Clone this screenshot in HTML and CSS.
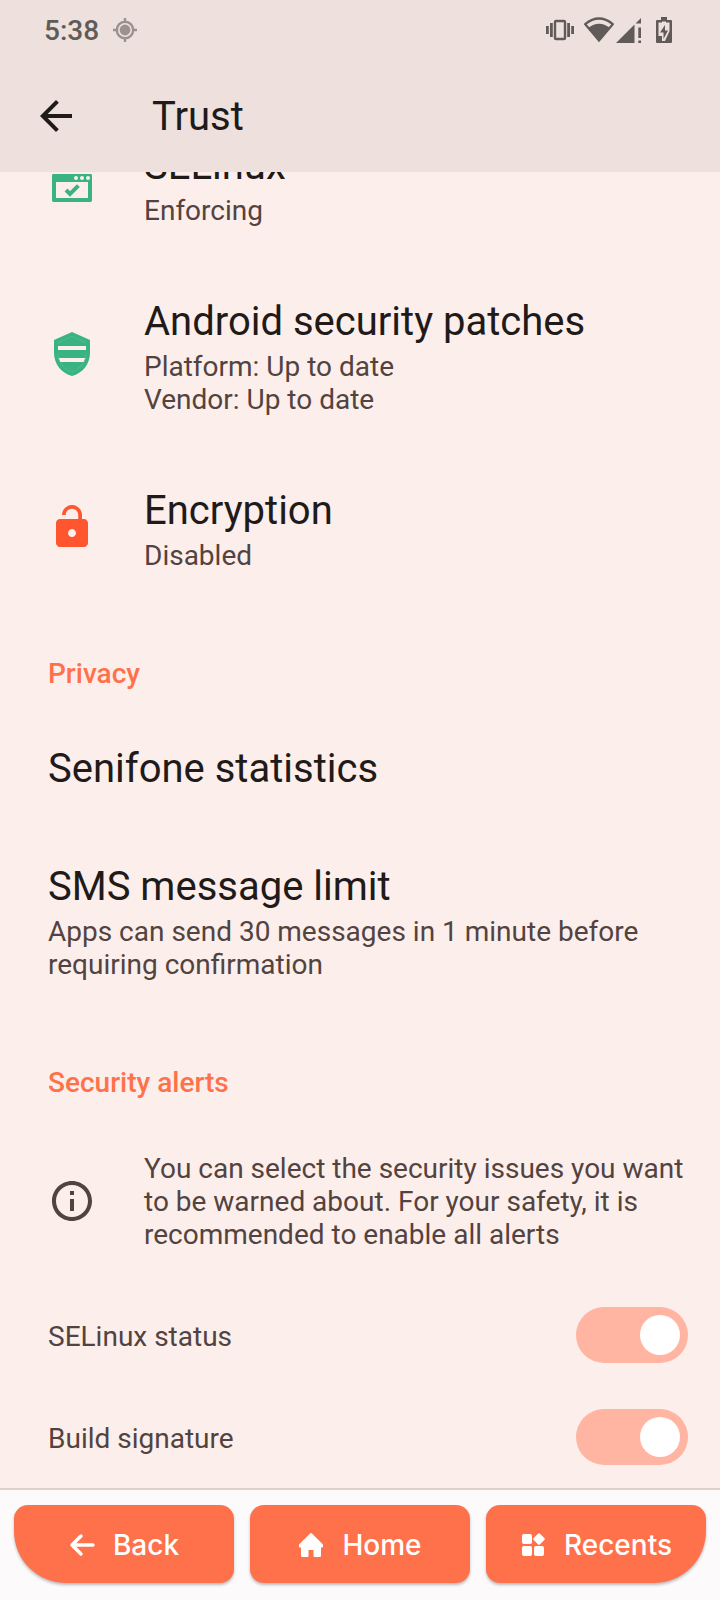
FILE: index.html
```
<!DOCTYPE html>
<html lang="en">
<head>
    <meta charset="UTF-8">
    <meta name="viewport" content="width=device-width, initial-scale=1.0">
    <title>Trust</title>
    <link rel="stylesheet" href="styles.css">
</head>
<body>
    <header>
        <div class="status-bar">
            <span class="clock">5:38</span>
            <svg class="location" width="24" height="24" viewBox="0 0 24 24">
                <circle cx="12" cy="12" r="5.4" fill="currentColor"/>
                <circle cx="12" cy="12" r="8.2" fill="none" stroke="currentColor" stroke-width="2.4"/>
                <path d="M12 0v4M12 20v4M0 12h4M20 12h4" stroke="currentColor" stroke-width="2.4"/>
            </svg>
            <div class="status-icons">
                <svg width="28" height="26" viewBox="0 0 28 26">
                    <rect x="9" y="4" width="10" height="18" rx="1" fill="none" stroke="currentColor" stroke-width="2.4"/>
                    <path d="M1.4 9v8M5.4 6v14M22.6 6v14M26.6 9v8" stroke="currentColor" stroke-width="2.8"/>
                </svg>
                <svg class="wifi" width="30" height="26" viewBox="0 0 30 26">
                    <path d="M1.2 7.2Q15-4.2 28.8 7.2L15 23.500z" fill="none" stroke="currentColor" stroke-width="2.2"/>
                    <path d="M4 11Q15 2.5 26 11L15 24z" fill="currentColor"/>
                </svg>
                <svg class="signal" width="26" height="26" viewBox="0 0 26 26">
                    <path d="M0 26L18.5 7.5V26zM19.500 6.500L25 1v5.500zM22.300 10.500H25V21h-2.700zM22.300 23.500H25V26h-2.700z" fill="currentColor"/>
                </svg>
                <svg class="battery" width="16" height="26" viewBox="0 0 16 26">
                    <path d="M5 0h6v3h4q1 0 1 1v21q0 1-1 1H1q-1 0-1-1V4q0-1 1-1h4z" fill="currentColor"/>
                    <path d="M2.500 5.500H6V4.500h4v1h3.500V14L9 24H6v-5H2.500z" fill="#eee0dd"/>
                    <path d="M9 8L4 15.500h3.500V22L12 13.500H9z" fill="currentColor"/>
                </svg>
            </div>
        </div>
        <div class="toolbar">
            <button class="up" aria-label="Navigate up">
                <svg width="48" height="48" viewBox="0 0 24 24"><path d="M20 11H7.830l5.590-5.590L12 4l-8 8 8 8 1.410-1.410L7.830 13H20z" fill="currentColor"/></svg>
            </button>
            <h1>Trust</h1>
        </div>
    </header>

    <main>
        <div class="item">
            <svg class="icon green" viewBox="0 0 24 24">
                <path fill-rule="evenodd" d="M2.700 7h18.600q.7 0 .7.700v12.600q0 .7-.7.700H2.700q-.7 0-.7-.700V7.700Q2 7 2.700 7zM4 11v8h16v-8z"/>
                <path d="M9 15l2 2 4.200-4.200" fill="none" stroke="currentColor" stroke-width="2"/>
                <g fill="#fceeeb"><circle cx="14" cy="9" r="1"/><circle cx="17" cy="9" r="1"/><circle cx="20" cy="9" r="1"/></g>
            </svg>
            <div>
                <h2>SELinux</h2>
                <p>Enforcing</p>
            </div>
        </div>
        <div class="item">
            <svg class="icon green" viewBox="0 0 24 24">
                <path d="M12 0l9 4v6.500c0 5.500-3.800 10.200-9 11.500-5.200-1.300-9-6-9-11.500V4z"/>
                <path d="M5 7h14v2H5zM5.300 13h13.400l-.8 2H6.100z" fill="#fceeeb"/>
                <path d="M5 5.300l7-3.100 7 3.100M5 11c.3 4 3 7.800 7 8.900 4-1.100 6.700-4.900 7-8.900" fill="none" stroke="#7bc9a8" stroke-width=".3" stroke-dasharray=".6 .4"/>
            </svg>
            <div>
                <h2>Android security patches</h2>
                <p>Platform: Up to date<br>Vendor: Up to date</p>
            </div>
        </div>
        <div class="item">
            <svg class="icon red" viewBox="0 0 24 24">
                <path fill-rule="evenodd" d="M18 7h-1V5c0-2.760-2.240-5-5-5S7 2.240 7 5h1.900c0-1.710 1.390-3.100 3.100-3.100s3.100 1.390 3.100 3.100v2H6c-1.100 0-2 .9-2 2v10c0 1.100.9 2 2 2h12c1.100 0 2-.9 2-2V9c0-1.100-.9-2-2-2zm-6 9c-1.100 0-2-.9-2-2s.9-2 2-2 2 .9 2 2-.9 2-2 2z"/>
            </svg>
            <div>
                <h2>Encryption</h2>
                <p>Disabled</p>
            </div>
        </div>

        <h3>Privacy</h3>
        <div class="item">
            <h2>Senifone statistics</h2>
        </div>
        <div class="item">
            <div>
                <h2>SMS message limit</h2>
                <p>Apps can send 30 messages in 1 minute before requiring confirmation</p>
            </div>
        </div>

        <h3>Security alerts</h3>
        <div class="item info">
            <svg class="icon brown" viewBox="0 0 24 24">
                <path d="M11 7h2v2h-2zm0 4h2v6h-2zm1-9C6.480 2 2 6.480 2 12s4.480 10 10 10 10-4.480 10-10S17.520 2 12 2zm0 18c-4.410 0-8-3.590-8-8s3.590-8 8-8 8 3.590 8 8-3.590 8-8 8z"/>
            </svg>
            <p>You can select the security issues you want to be warned about. For your safety, it is recommended to enable all alerts</p>
        </div>
        <div class="toggle">
            <label for="selinux">SELinux status</label>
            <input type="checkbox" id="selinux" checked>
        </div>
        <div class="toggle">
            <label for="signature">Build signature</label>
            <input type="checkbox" id="signature" checked>
        </div>
    </main>

    <nav>
        <button class="back">
            <svg width="26" height="26" viewBox="0 0 26 26"><path d="M24 12H3M12 3L3 12l9 9" fill="none" stroke="currentColor" stroke-width="3.4" stroke-linecap="round" stroke-linejoin="round"/></svg>
            Back
        </button>
        <button>
            <svg width="26" height="26" viewBox="0 0 26 26"><path d="M13 1L24 12v1.500h-2V23h-5.500v-7h-7v7H4v-9.500H2V12z" fill="currentColor" stroke="currentColor" stroke-width="2" stroke-linejoin="round"/></svg>
            Home
        </button>
        <button class="recents">
            <svg width="26" height="26" viewBox="0 0 26 26">
                <g fill="currentColor"><rect x="2" y="1" width="10" height="10" rx="2"/><rect x="2" y="13" width="10" height="10" rx="2"/><rect x="14" y="13" width="10" height="10" rx="2"/><rect x="14.500" y="1.500" width="9" height="9" rx="1.500" transform="rotate(45 19 6)"/></g>
            </svg>
            Recents
        </button>
    </nav>
</body>
</html>
```

FILE: styles.css
```
* {
    box-sizing: border-box;
}
body {
    margin: 0;
    height: 100vh;
    display: flex;
    flex-direction: column;
    font-family: Roboto, sans-serif;
    font-size: 28px;
    line-height: 33px;
    background: #fceeeb;
    color: #201a19;
}
h1, h2, h3, p {
    margin: 0;
}
h1, h2 {
    font-size: 40px;
    font-weight: 400;
    line-height: 47px;
}
button {
    border: none;
    font: inherit;
    cursor: pointer;
}
svg {
    flex: none;
    display: block;
}
header {
    background: #eee0dd;
}
.status-bar {
    display: flex;
    align-items: center;
    height: 60px;
    padding: 0 48px 0 44px;
    color: #605a58;
}
.clock {
    font-weight: 500;
}
.location {
    margin-left: 14px;
    color: #9b918f;
}
.status-icons {
    display: flex;
    margin-left: auto;
}
.wifi {
    margin-left: 10px;
}
.signal {
    margin-left: 2px;
}
.battery {
    margin-left: 14px;
}
.toolbar {
    display: flex;
    align-items: center;
    height: 112px;
    padding: 0 32px;
    gap: 72px;
}
.up {
    padding: 0;
    background: none;
    color: #201a19;
}
/* list is scrolled to its end, the first row goes under the toolbar */
main {
    flex: 1;
    min-height: 0;
    overflow: hidden;
    display: flex;
    flex-direction: column;
    justify-content: flex-end;
}
.item {
    flex: none;
    display: flex;
    align-items: center;
    gap: 48px;
    padding: 35px 32px 36px 48px;
}
.item p {
    color: #534340;
}
.item h2 + p {
    margin-top: 5px;
}
.info {
    padding-top: 33px;
    padding-bottom: 33px;
}
.icon {
    width: 48px;
    height: 48px;
    margin-bottom: 2px;
    fill: currentColor;
}
.green {
    color: #39b380;
}
.red {
    color: #ff5630;
}
.brown {
    color: #534340;
}
h3 {
    flex: none;
    padding: 49px 48px 20px;
    font-size: 28px;
    font-weight: 500;
    color: #ff714b;
}
.toggle {
    flex: none;
    display: flex;
    align-items: center;
    justify-content: space-between;
    height: 102px;
    padding: 0 32px 0 48px;
    color: #534340;
}
.toggle label {
    padding-top: 2px;
}
.toggle input {
    appearance: none;
    width: 112px;
    height: 56px;
    margin: 0;
    padding: 8px;
    display: flex;
    border-radius: 28px;
    background: #d8c2bc;
}
.toggle input::before {
    content: "";
    width: 40px;
    height: 40px;
    border-radius: 50%;
    background: #fff;
}
.toggle input:checked {
    justify-content: flex-end;
    background: #ffb5a2;
}
nav {
    display: flex;
    gap: 16px;
    padding: 15px 14px 17px;
    border-top: 2px solid #dfd0ce;
    background: #fdfafb;
}
nav button {
    flex: 1;
    display: flex;
    align-items: center;
    justify-content: center;
    gap: 18px;
    height: 78px;
    padding: 3px 0 0;
    border-radius: 14px;
    background: #ff714b;
    color: #fff;
    font-family: Inter, sans-serif;
    font-weight: 500;
    box-shadow: 0 2px 3px rgba(0, 0, 0, 0.25);
}
.back {
    border-bottom-left-radius: 52px;
}
.recents {
    border-bottom-right-radius: 52px;
}
```
